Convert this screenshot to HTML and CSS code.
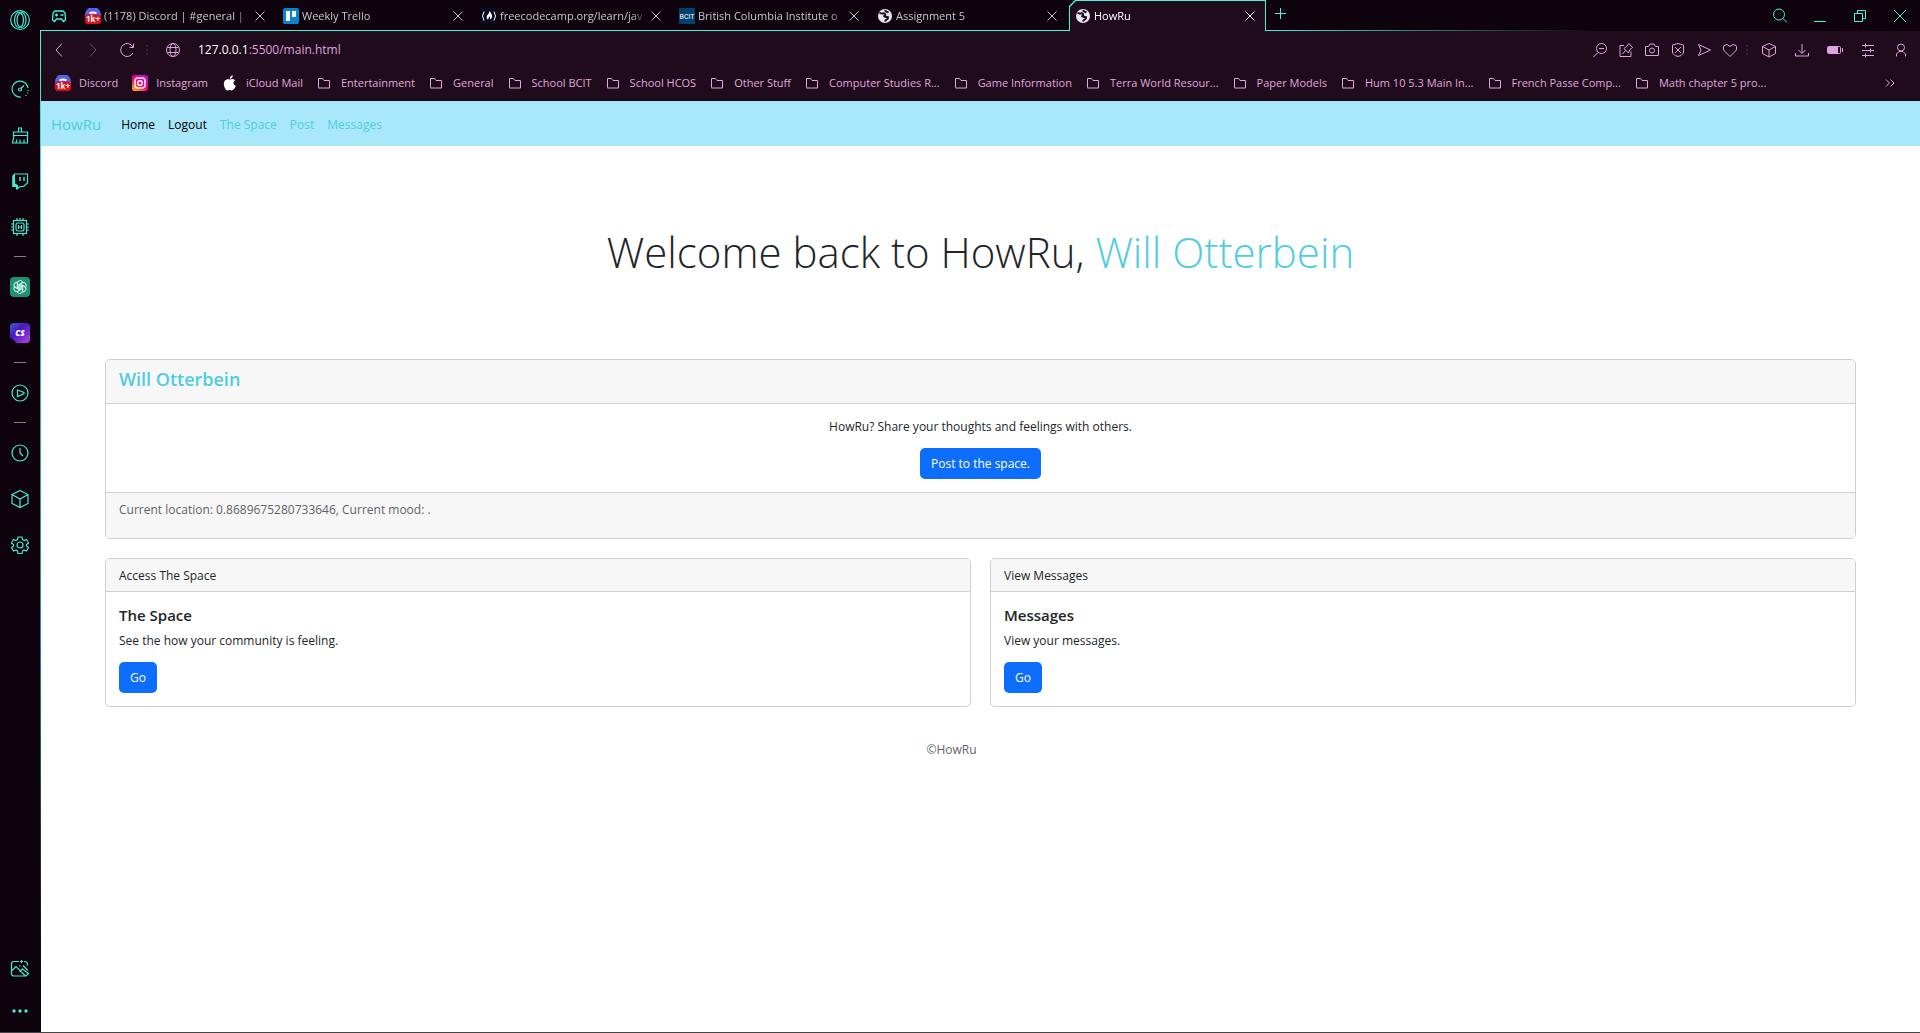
FILE: index.html
```html
<!DOCTYPE html>
<html lang="en">
<head>
<meta charset="utf-8">
<title>HowRu</title>
<link rel="stylesheet" href="styles.css">
</head>
<body>
<svg class="sprite" aria-hidden="true">
  <symbol id="folder" viewBox="0 0 14 14"><path d="M1.500 11.500v-9h4l1.500 2h5.500v7.500h-11z"/></symbol>
  <symbol id="cross" viewBox="0 0 12 12"><path d="M1.500 1.500l9 9M10.500 1.500l-9 9"/></symbol>
  <symbol id="cube" viewBox="0 0 20 20"><path d="M10 1.500l8 4v9l-8 4-8-4v-9zM2 5.500l8 4.500 8-4.500M10 10v8.500"/></symbol>
  <symbol id="earth" viewBox="0 0 16 16"><circle cx="8" cy="8" r="7" fill="#e8e6ee" stroke="none"/><path d="M2.500 4.500c2 2.500 4-.5 5.500 1.500s-2 1.500-.5 2.500 4-.5 3.500 1.500-2.500 1.500-3 3.500M8.500 2c-.5 2 1.500 1.500 3 2.500" fill="none" stroke="#1f0b1c" stroke-width="2"/></symbol>
</svg>
<div class="browser">
  <aside class="rail">
    <button class="rail-logo" aria-label="Opera"><svg class="i20" viewBox="0 0 20 20"><circle cx="10" cy="10" r="9.300"/><ellipse cx="9" cy="10" rx="4.500" ry="7.500"/><ellipse cx="11.500" cy="10" rx="4.500" ry="7.500"/></svg></button>
    <button aria-label="Control"><svg class="i18" viewBox="0 0 18 18"><path d="M10 17A8 8 0 1 1 17 8M17 10v1M16.500 12.500v1M15 15v1M10 8.500l3-3"/><circle cx="9" cy="9.500" r="1.500"/></svg></button>
    <button aria-label="Cleaner"><svg class="i18" viewBox="0 0 18 18"><path d="M7.500 6V2h3v4M2.500 6h14v3.500h-14zM3 9.500L1.500 17h15V9.500M5 17l1-3.500M9 17v-3.500M13 17v-3.500"/></svg></button>
    <button aria-label="Twitch"><svg class="i18" viewBox="0 0 18 18"><path d="M3.500 2h13v9l-4 3.500H9l-3 2.500v-2.500H2V4z"/><path d="M1.500 4l2.500-2v9.500l3 1.500v3l-2 1v-2.500H1.500z" class="solid"/><path d="M9 5v4M13 5v4" stroke-width="1.500"/></svg></button>
    <button aria-label="Hardware"><svg class="i20" viewBox="0 0 20 20"><rect x="3.500" y="3.500" width="13" height="13"/><rect x="6" y="6" width="8" height="8" rx="2"/><path d="M8.500 8v4M11.500 8v4M8.500 10h3M7 1v2.500M10 1v2.500M13 1v2.500M7 16.500V19M13 16.500V19M1 7h2.500M1 10h2.500M1 13h2.500M16.500 7H19M16.500 10H19M16.500 13H19"/></svg></button>
    <hr>
    <button aria-label="ChatGPT"><svg class="i20" viewBox="0 0 20 20"><rect width="20" height="20" rx="4" fill="#1f9174" stroke="none"/><g stroke="#c9efe3" stroke-width="1"><path id="petal" d="M7.500 11.500V6.500Q7.500 3.500 10 3.500q2 0 3 1.500L9 7.500v4"/><use href="#petal" transform="rotate(60 10 10)"/><use href="#petal" transform="rotate(120 10 10)"/><use href="#petal" transform="rotate(180 10 10)"/><use href="#petal" transform="rotate(240 10 10)"/><use href="#petal" transform="rotate(300 10 10)"/></g></svg></button>
    <button aria-label="ChatSonic"><svg class="i20" viewBox="0 0 20 20"><defs><linearGradient id="sonic" x1="0" y1="0" x2="1" y2="1"><stop offset="0" stop-color="#3f60d0"/><stop offset=".4" stop-color="#4a16c0"/><stop offset="1" stop-color="#b04ad8"/></linearGradient></defs><path d="M4 0h12q4 0 4 4v12q0 4-4 4H6q-1-3-6-5V4q0-4 4-4z" fill="url(#sonic)" stroke="none"/><text x="10" y="13" text-anchor="middle" class="sonic">CS</text></svg></button>
    <hr>
    <button aria-label="Player"><svg class="i18" viewBox="0 0 18 18"><circle cx="9" cy="9" r="8"/><path d="M6.500 6v6.500l6.500-3v-1z"/></svg></button>
    <hr>
    <button aria-label="History"><svg class="i18" viewBox="0 0 18 18"><circle cx="9" cy="9" r="8"/><path d="M9 4v5l3 3"/></svg></button>
    <button aria-label="Extensions"><svg class="i20"><use href="#cube"/></svg></button>
    <button aria-label="Settings"><svg class="i18" viewBox="0 0 18 18"><circle cx="9" cy="9" r="3"/><path d="M7 1h4l.5 2.500 1.500 1 2.500-1 2 3.500-2 1.500v1.500l2 1.500-2 3.500-2.500-1-1.500 1-.5 2.500H7l-.5-2.500-1.500-1-2.500 1-2-3.500 2-1.500V8.500L.500 7l2-3.500 2.500 1 1.500-1z"/></svg></button>
    <div class="rail-end">
      <button aria-label="Wallpaper"><svg class="i20" viewBox="0 0 20 20"><path d="M9 2.500H4Q1.500 2.500 1.500 5v9.500Q1.500 17 4 17h11q2.500 0 2.500-2.500M1.500 12L6 7.500l9 9M9.500 13l3-3 6.500 5M11.500 1v3M10 2.500h3M14 2.500q3.500 0 3.500 2.500v1.500M13 6.500l5 5M9 7h1.500"/></svg></button>
      <button aria-label="More"><svg class="i18" viewBox="0 0 18 18"><g class="solid"><circle cx="3" cy="9" r="1.700"/><circle cx="9" cy="9" r="1.700"/><circle cx="15" cy="9" r="1.700"/></g></svg></button>
    </div>
  </aside>

  <div class="window">
    <header class="tabs">
      <button class="corner" aria-label="GX corner"><svg class="i16" viewBox="0 0 16 16"><path d="M4 3h8l2 2 .5 7-2 1.500L10.500 11h-5l-2 2.500-2-1.500L2 5zM5.500 5.500v3M4 7h3M9.500 7h3" stroke-width="1.300"/></svg></button>
      <div class="tab"><svg class="i16" viewBox="0 0 16 16"><path d="M0 7a7 7 0 0 1 16 0v4H0z" fill="#5663e8" stroke="none"/><path d="M4.500 5.500q3.500-2 7 0" stroke="#fff" stroke-width="2"/><rect y="6.500" width="16" height="9.500" rx="3" fill="#dd1018" stroke="none"/><text x="8" y="14" text-anchor="middle" class="count">1k+</text></svg><span>(1178) Discord | #general |</span><button aria-label="Close tab"><svg class="i12"><use href="#cross"/></svg></button></div>
      <div class="tab"><svg class="i16" viewBox="0 0 16 16"><rect width="16" height="16" rx="2" fill="#0a84cc" stroke="none"/><path d="M3 3h4v10H3zM9 3h4v6H9z" fill="#fff" stroke="none"/></svg><span>Weekly Trello</span><button aria-label="Close tab"><svg class="i12"><use href="#cross"/></svg></button></div>
      <div class="tab"><svg class="i16" viewBox="0 0 16 16"><rect width="16" height="16" fill="#0a0a23" stroke="none"/><path d="M3 3.500Q0 8 3 12.500M13 3.500q3 4.500 0 9" stroke="#fff"/><path d="M8.500 3q3 3.500 2.500 6-.5 2-2 2.500 1-2-1-3.500 0 2-1 3.500-2-1-1-4Q8 6 8.500 3z" fill="#fff" stroke="none"/></svg><span>freecodecamp.org/learn/jav</span><button aria-label="Close tab"><svg class="i12"><use href="#cross"/></svg></button></div>
      <div class="tab"><svg class="i16" viewBox="0 0 16 16"><rect width="16" height="16" fill="#00426b" stroke="none"/><text x="8" y="11" text-anchor="middle" class="bcit">BCIT</text></svg><span>British Columbia Institute o</span><button aria-label="Close tab"><svg class="i12"><use href="#cross"/></svg></button></div>
      <div class="tab"><svg class="i16"><use href="#earth"/></svg><span>Assignment 5</span><button aria-label="Close tab"><svg class="i12"><use href="#cross"/></svg></button></div>
      <div class="tab active"><svg class="i16"><use href="#earth"/></svg><span>HowRu</span><button aria-label="Close tab"><svg class="i12"><use href="#cross"/></svg></button></div>
      <button class="new-tab" aria-label="New tab"><svg class="i12" viewBox="0 0 12 12"><path d="M5.500 0v11M0 5.500h11"/></svg></button>
      <div class="controls">
        <button aria-label="Search tabs"><svg class="i16" viewBox="0 0 16 16"><circle cx="7" cy="6.500" r="5.500"/><path d="M11 10.500l4 4"/></svg></button>
        <button aria-label="Minimize"><svg class="i16" viewBox="0 0 16 16"><path d="M2 13.500h12"/></svg></button>
        <button aria-label="Restore"><svg class="i16" viewBox="0 0 16 16"><path d="M2.500 5.500h8v8h-8zM5.500 5.500v-3h8v8h-3"/></svg></button>
        <button aria-label="Close"><svg class="i16" viewBox="0 0 16 16"><path d="M2 2l12 12M14 2L2 14"/></svg></button>
      </div>
    </header>

    <div class="frame">
      <div class="toolbar">
        <div class="history">
          <button aria-label="Back"><svg class="i16" viewBox="0 0 16 16"><path d="M11 1.500L5 8l6 6.500"/></svg></button>
          <button aria-label="Forward" disabled><svg class="i16" viewBox="0 0 16 16"><path d="M5 1.500L11 8l-6 6.500"/></svg></button>
          <button aria-label="Reload"><svg class="i16" viewBox="0 0 16 16"><path d="M14 5A6.500 6.500 0 1 0 14 11M14.500 1.500v4h-4"/></svg></button>
        </div>
        <i class="dots"></i>
        <svg class="i16 site" viewBox="0 0 16 16"><circle cx="8" cy="8" r="6.500"/><ellipse cx="8" cy="8" rx="3" ry="6.500"/><path d="M2.500 5.500h11M2.500 10.500h11"/></svg>
        <a class="url" href="#"><b>127.0.0.1</b>:5500/main.html</a>
        <div class="actions">
          <button aria-label="Zoom out"><svg class="i16" viewBox="0 0 16 16"><circle cx="9.500" cy="6.500" r="5"/><path d="M7 6.500h5M6 10.500l-4.500 4.500"/></svg></button>
          <button aria-label="Pinboard"><svg class="i16" viewBox="0 0 16 16"><path d="M6 3.500H2v11h11v-5M4.500 12l3-3.500M6 6.500l4.500 4.500 1-3 3-2.500-3.500-4-2.500 3z"/></svg></button>
          <button aria-label="Snapshot"><svg class="i16" viewBox="0 0 16 16"><path d="M1.500 4.500h3l1.500-2.500h4l1.500 2.500h3v9h-13z"/><circle cx="8" cy="8.500" r="2.500"/></svg></button>
          <button aria-label="Ad blocker"><svg class="i16" viewBox="0 0 16 16"><path d="M2.500 3L8 1.500 13.500 3v8L11 13.500l-3 1-3-1L2.500 11zM5 5l6 6M11 5l-6 6"/></svg></button>
          <button aria-label="Flow"><svg class="i16" viewBox="0 0 16 16"><path d="M2.500 2.500L14.500 8l-12 5.500L5 8z"/></svg></button>
          <button aria-label="Bookmark"><svg class="i16" viewBox="0 0 16 16"><path d="M8 14.500L2 8.500Q.500 6 2 3.500 5 1 8 4.500 11 1 14 3.500q1.500 2.500 0 5z"/></svg></button>
        </div>
        <i class="dots"></i>
        <div class="tools">
          <button aria-label="Extensions"><svg class="i16" viewBox="0 0 16 16"><path d="M8 1.500l6.500 3v7L8 15l-6.500-3.500v-7zM1.500 4.500L8 8l6.500-3.500M8 8v7"/></svg></button>
          <button aria-label="Downloads"><svg class="i16" viewBox="0 0 16 16"><path d="M8 2v9M4.500 8L8 11.500 11.500 8M1.500 11v3h13v-3"/></svg></button>
          <button aria-label="Battery saver"><svg class="i16" viewBox="0 0 16 16"><rect x=".500" y="4.500" width="13" height="7" rx="1"/><path d="M1 5h10v6H1z" class="solid"/><path d="M15.500 6v4"/></svg></button>
          <button aria-label="Easy setup"><svg class="i16" viewBox="0 0 16 16"><path d="M2 3.500h12M2 8.500h12M2 13.500h12M5.500 1.500v4M10.500 6.500v4M5.500 11.500v4"/></svg></button>
          <button aria-label="Profile"><svg class="i16" viewBox="0 0 16 16"><circle cx="8" cy="5.500" r="3.500"/><path d="M3.500 14.500V12L6 9.500h4l2.500 2.500v2.500"/></svg></button>
        </div>
      </div>

      <nav class="bookmarks" aria-label="Bookmarks">
        <a href="#"><svg class="i16" viewBox="0 0 16 16"><path d="M0 7a7 7 0 0 1 16 0v4H0z" fill="#5663e8" stroke="none"/><path d="M4.500 5.500q3.500-2 7 0" stroke="#fff" stroke-width="2"/><rect y="6.500" width="16" height="9.500" rx="3" fill="#dd1018" stroke="none"/><text x="8" y="14" text-anchor="middle" class="count">1k+</text></svg>Discord</a>
        <a href="#"><svg class="i16" viewBox="0 0 16 16"><defs><linearGradient id="insta" x1="0" y1="1" x2=".7" y2="0"><stop offset="0" stop-color="#ffd600"/><stop offset=".5" stop-color="#ff0169"/><stop offset="1" stop-color="#d300c5"/></linearGradient></defs><rect width="16" height="16" rx="3" fill="url(#insta)" stroke="none"/><g stroke="#fff" stroke-width="1.500"><rect x="3" y="3" width="10" height="10" rx="3"/><circle cx="8" cy="8" r="2.300"/></g></svg>Instagram</a>
        <a href="#"><svg class="i16" viewBox="0 0 16 16"><path d="M8 4.500c1.500-.8 3.500-1 5 .7-2.200 1.500-2 4.500.8 5.600-1 2.700-2.500 4.700-3.800 4.700-1 0-1.300-.6-2.300-.6s-1.400.6-2.300.6C3.500 15.500 0 9 3 5.500 4.500 4 6.500 4 8 4.500zM7.800 3.800C7.700 2 9 .500 10.800.300c.2 1.900-1.200 3.500-3 3.500z" fill="#fff" stroke="none"/></svg>iCloud Mail</a>
        <a class="dir" href="#"><svg class="i14"><use href="#folder"/></svg>Entertainment</a>
        <a class="dir" href="#"><svg class="i14"><use href="#folder"/></svg>General</a>
        <a class="dir" href="#"><svg class="i14"><use href="#folder"/></svg>School BCIT</a>
        <a class="dir" href="#"><svg class="i14"><use href="#folder"/></svg>School HCOS</a>
        <a class="dir" href="#"><svg class="i14"><use href="#folder"/></svg>Other Stuff</a>
        <a class="dir" href="#"><svg class="i14"><use href="#folder"/></svg>Computer Studies R...</a>
        <a class="dir" href="#"><svg class="i14"><use href="#folder"/></svg>Game Information</a>
        <a class="dir" href="#"><svg class="i14"><use href="#folder"/></svg>Terra World Resour...</a>
        <a class="dir" href="#"><svg class="i14"><use href="#folder"/></svg>Paper Models</a>
        <a class="dir" href="#"><svg class="i14"><use href="#folder"/></svg>Hum 10 5.3 Main In...</a>
        <a class="dir" href="#"><svg class="i14"><use href="#folder"/></svg>French Passe Comp...</a>
        <a class="dir" href="#"><svg class="i14"><use href="#folder"/></svg>Math chapter 5 pro...</a>
        <button class="more" aria-label="More bookmarks"><svg class="i12" viewBox="0 0 12 12"><path d="M2 2.500L5.500 6 2 9.500M6.500 2.500L10 6 6.500 9.500"/></svg></button>
      </nav>

      <div class="page">
        <nav class="site-nav">
          <a class="brand" href="#">HowRu</a>
          <a class="on" href="#">Home</a>
          <a class="on" href="#">Logout</a>
          <a href="#">The Space</a>
          <a href="#">Post</a>
          <a href="#">Messages</a>
        </nav>
        <main>
          <h1>Welcome back to HowRu, <span>Will Otterbein</span></h1>
          <section class="card">
            <h2 class="card-head name">Will Otterbein</h2>
            <div class="card-body centered">
              <p>HowRu? Share your thoughts and feelings with others.</p>
              <button class="btn">Post to the space.</button>
            </div>
            <div class="card-foot">Current location: 0.8689675280733646, Current mood: .</div>
          </section>
          <div class="pair">
            <section class="card">
              <div class="card-head">Access The Space</div>
              <div class="card-body">
                <h3>The Space</h3>
                <p>See the how your community is feeling.</p>
                <button class="btn">Go</button>
              </div>
            </section>
            <section class="card">
              <div class="card-head">View Messages</div>
              <div class="card-body">
                <h3>Messages</h3>
                <p>View your messages.</p>
                <button class="btn">Go</button>
              </div>
            </section>
          </div>
        </main>
        <footer>©HowRu</footer>
      </div>
    </div>
  </div>
</div>
</body>
</html>
```
FILE: styles.css
```css
* { box-sizing: border-box; }

body {
  margin: 0;
  font-family: "Open Sans", "Noto Sans", sans-serif;
  font-size: 12px;
  line-height: 20px;
  color: #212529;
  background: #fff;
}

h1, h2, h3, p { margin: 0; }
a { color: inherit; text-decoration: none; }
button {
  display: flex;
  align-items: center;
  justify-content: center;
  padding: 0;
  border: 0;
  background: none;
  color: inherit;
  font: inherit;
}
svg { flex: none; display: block; fill: none; stroke: currentColor; stroke-width: 1; }
.solid { fill: currentColor; stroke: none; }
.sprite { display: none; }
.i12 { width: 12px; height: 12px; }
.i14 { width: 14px; height: 14px; }
.i16 { width: 16px; height: 16px; }
.i18 { width: 18px; height: 18px; }
.i20 { width: 20px; height: 20px; }
.count { font-size: 8px; font-weight: 700; fill: #fff; stroke: none; }
.sonic { font-size: 8px; font-weight: 800; font-style: italic; fill: #fff; stroke: none; }
.bcit { font-family: "Roboto", sans-serif; font-size: 7px; fill: #fff; stroke: none; }

.browser {
  display: grid;
  grid-template-columns: 40px minmax(0, 1fr);
  min-height: 100vh;
  border-bottom: 1px solid #444;
}

/* Sidebar */
.rail {
  display: flex;
  flex-direction: column;
  background: #0f030d;
  color: #42ecd2;
}
.rail svg { stroke-width: 1.2; }
.rail button { height: 46px; }
.rail .rail-logo { height: 40px; margin-bottom: 26px; }
.rail hr {
  width: 12px;
  height: 1px;
  margin: 6px auto 7px;
  border: 0;
  background: currentColor;
}
.rail-end { margin-top: auto; }
.rail-end button { width: 100%; height: 42px; }

/* Tab strip */
.window { display: flex; flex-direction: column; min-width: 0; }
.tabs {
  display: flex;
  height: 31px;
  background:
    linear-gradient(to right, #46f3dc 65%, transparent 83%) bottom / 100% 1px no-repeat,
    #0f030d;
  color: #46f3dc;
}
.corner { width: 39px; padding-right: 1px; }
.tab {
  position: relative;
  z-index: 0;
  display: flex;
  align-items: center;
  gap: 3px;
  width: 198px;
  padding: 0 11px 0 6px;
  color: #c9c6c9;
  font-size: 11px;
}
.tab span {
  flex: 1;
  overflow: hidden;
  white-space: nowrap;
  mask-image: linear-gradient(to right, #000 90%, transparent);
}
.tab.active { width: 197px; color: #fff; padding-right: 10px; }
.tab.active::before,
.tab.active::after {
  content: "";
  position: absolute;
  z-index: -1;
  inset: 0;
  background: #46f3dc;
  clip-path: polygon(6px 0, 100% 0, 100% 100%, 0 100%, 0 6px);
}
.tab.active::after { inset: 1px 1px 0; background: #1f0b1c; }
.new-tab { width: 30px; padding-bottom: 4px; }
.controls { display: flex; margin-left: auto; }
.controls button { width: 40px; }

/* Address bar and bookmarks */
.frame {
  flex: 1;
  display: flex;
  flex-direction: column;
  border-left: 1px solid;
  border-image: linear-gradient(#46f3dc, #2a9083 60%, #0f030d 95%) 1;
}
.toolbar {
  display: flex;
  align-items: center;
  height: 38px;
  padding: 0 3px 0 1px;
  background: #1f0b1c;
  color: #dea3dc;
}
.history { display: flex; margin-right: 2px; }
.history button { width: 34px; }
.history button:disabled { opacity: .4; }
.dots {
  width: 2px;
  height: 10px;
  background: repeating-linear-gradient(#3c1a38 0 2px, transparent 2px 4px);
}
.site { margin: 0 17px; }
.url b { color: #fff; font-weight: 400; }
.actions { display: flex; margin-left: auto; margin-right: 3px; }
.actions button { width: 26px; }
.tools { display: flex; margin-left: 4px; }
.tools button { width: 33px; }
.bookmarks {
  display: flex;
  align-items: center;
  height: 32px;
  gap: 14px;
  padding: 0 24px 4px 14px;
  background: #1f0b1c;
  color: #e0a6de;
  font-size: 11px;
  white-space: nowrap;
}
.bookmarks a { display: flex; align-items: center; gap: 8px; }
.bookmarks .dir { gap: 10px; }
.more { margin-left: auto; }

/* Page */
.page { flex: 1; background: #fff; }
.site-nav {
  display: flex;
  align-items: center;
  gap: 13px;
  height: 45px;
  padding: 2px 10px 0;
  background: #a9e8fa;
  color: #4fcde0;
}
.site-nav .on { color: #000; }
.site-nav .brand { margin-right: 7px; padding-bottom: 2px; font-size: 15px; }
main { padding: 79px 64px 0; }
h1 {
  margin-bottom: 80px;
  font-size: 42px;
  font-weight: 300;
  line-height: 54px;
  text-align: center;
}
h1 span, .name { color: #4fcde0; }
.card {
  border: 1px solid #cfcfcf;
  border-radius: 5px;
  overflow: hidden;
}
.card-head {
  padding: 7px 13px 5px;
  background: #f7f7f7;
  border-bottom: 1px solid #cfcfcf;
}
.name { padding: 6px 13px 11px; font-size: 18px; font-weight: 600; line-height: 26px; }
.card-body { padding: 13px; }
.card-body p { margin-bottom: 11px; }
.centered { text-align: center; }
.centered .btn { margin: 0 auto; }
.card-body h3 { margin-bottom: 6px; font-size: 15px; font-weight: 600; line-height: 20px; }
.btn {
  height: 31px;
  padding: 1px 11px 0;
  border-radius: 5px;
  background: #0d6efd;
  color: #fff;
}
.card-foot {
  padding: 7px 13px 18px;
  background: #f7f7f7;
  border-top: 1px solid #cfcfcf;
  color: #5f6368;
}
.pair {
  display: grid;
  grid-template-columns: 1fr 1fr;
  gap: 19px;
  margin-top: 19px;
}
footer {
  margin-top: 33px;
  padding-right: 58px;
  text-align: center;
  color: #5f6368;
}
```
